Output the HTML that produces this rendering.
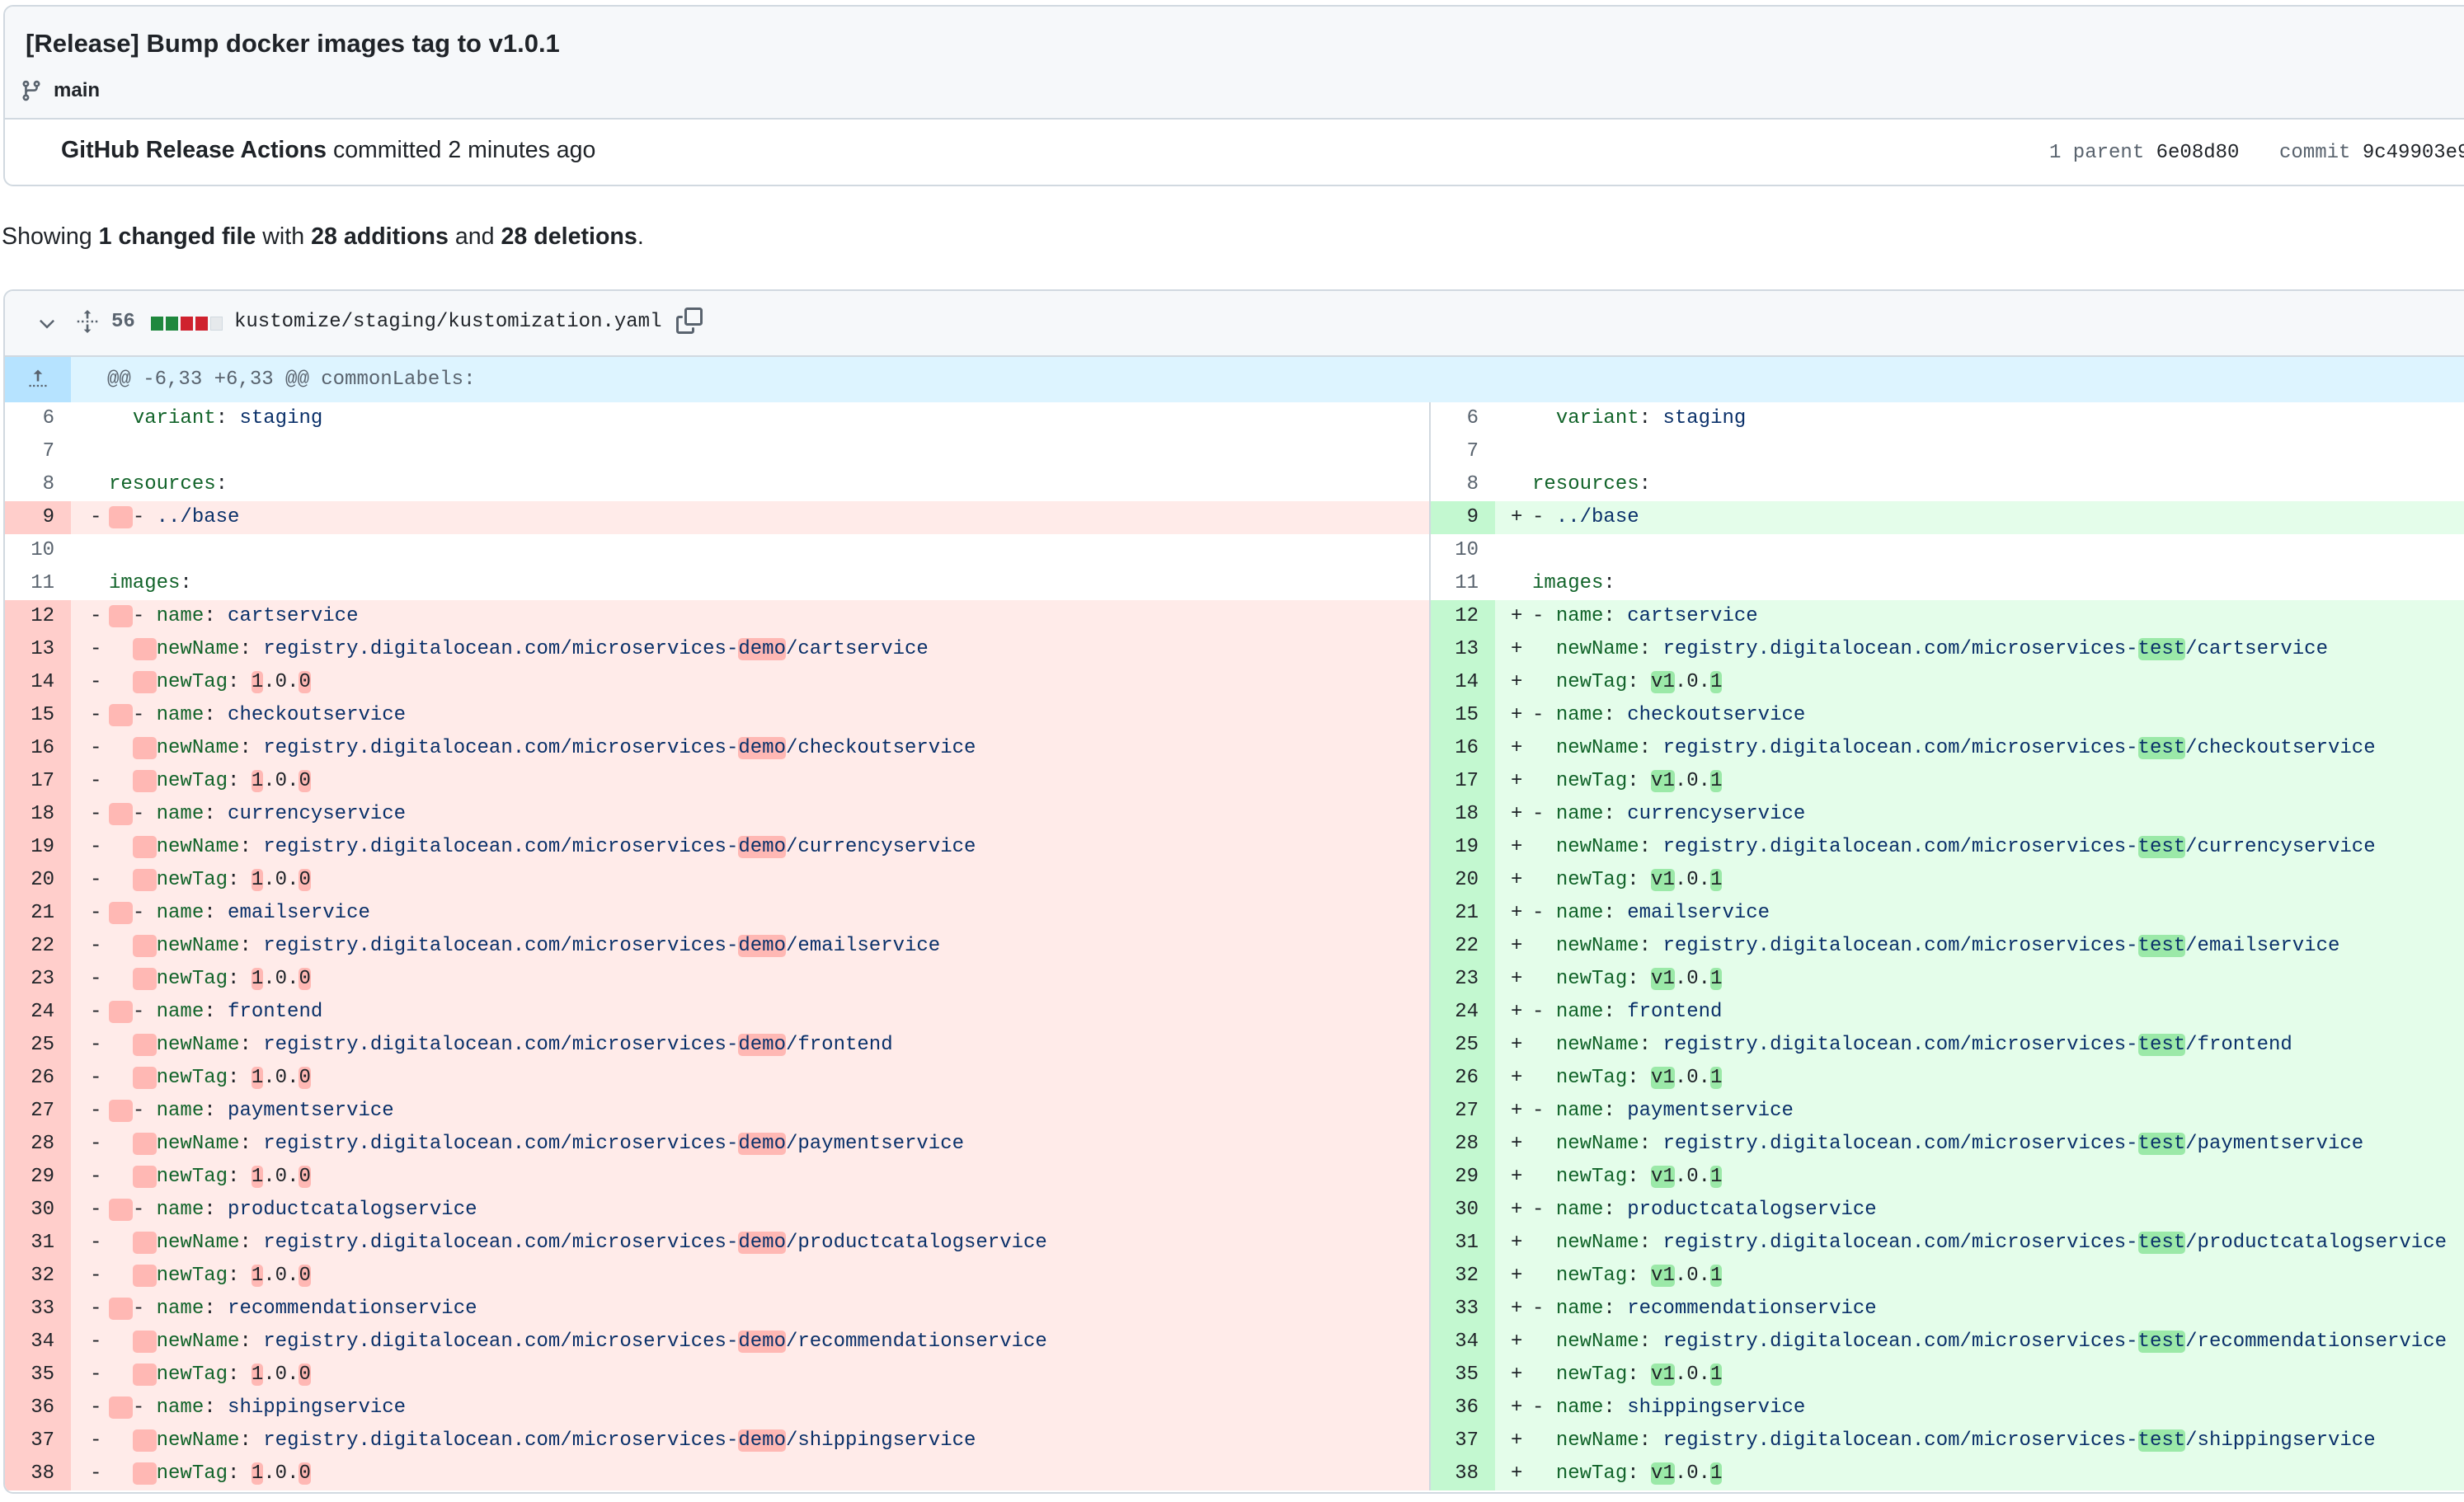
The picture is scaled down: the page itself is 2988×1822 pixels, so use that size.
<!DOCTYPE html>
<html><head><meta charset="utf-8"><style>
*{box-sizing:border-box;margin:0;padding:0}
body{width:2988px;height:1822px;background:#fff;position:relative;overflow:hidden;font-family:"Liberation Sans",sans-serif;color:#1f2328}
.box{position:absolute;left:4px;width:3100px;border:2px solid #d1d9e0;border-radius:12px;overflow:hidden}
.mono{font-family:"Liberation Mono",monospace}
.row{display:flex;height:40px;line-height:40px;font-family:"Liberation Mono",monospace;font-size:24px;white-space:pre}
.n{width:80px;text-align:right;padding-right:20px;color:#59636e;flex:none}
.lc{width:1647px;flex:none;padding-left:23px}
.rn{width:80px;text-align:right;padding-right:20px;color:#59636e;flex:none;border-left:2px solid #d1d9e0}
.rc{flex:1;padding-left:19px}
.m{display:inline-block;width:23px;color:#1f2328}
.rc .m{width:26px}
.d .n{background:#ffcecb;color:#1f2328}.d .lc{background:#ffebe9}
.a .rn{background:#c3f8d0;color:#1f2328}.a .rc{background:#e4fdea}
.k{color:#116329}.v{color:#0a3069}
.x{background:#ffb8b4;border-radius:5px}
.y{background:#9be9a8;border-radius:5px}
</style></head><body>
<div class="box" style="top:6px;height:220px">
 <div style="background:#f6f8fa;height:137px;border-bottom:2px solid #d1d9e0;position:relative">
  <div style="position:absolute;left:25px;top:27px;font-size:31px;font-weight:bold">[Release] Bump docker images tag to v1.0.1</div>
  <svg style="position:absolute;left:18px;top:88px" width="28" height="28" viewBox="0 0 16 16" fill="#59636e"><path d="M9.5 3.25a2.25 2.25 0 1 1 3 2.122V6A2.5 2.5 0 0 1 10 8.5H6a1 1 0 0 0-1 1v1.128a2.251 2.251 0 1 1-1.5 0V5.372a2.25 2.25 0 1 1 1.5 0v1.836A2.493 2.493 0 0 1 6 7h4a1 1 0 0 0 1-1v-.628A2.25 2.25 0 0 1 9.5 3.25Zm-6 0a.75.75 0 1 0 1.5 0 .75.75 0 0 0-1.5 0Zm8.25-.75a.75.75 0 1 0 0 1.5.75.75 0 0 0 0-1.5ZM4.25 12a.75.75 0 1 0 0 1.5.75.75 0 0 0 0-1.5Z"/></svg>
  <div style="position:absolute;left:59px;top:88px;font-size:24px;font-weight:bold">main</div>
 </div>
 <div style="position:absolute;left:68px;top:158px;font-size:28.5px"><b>GitHub Release Actions</b> committed 2 minutes ago</div>
 <div class="mono" style="position:absolute;left:2479px;top:164px;font-size:24px;color:#59636e">1 parent <span style="color:#1f2328">6e08d80</span></div>
 <div class="mono" style="position:absolute;left:2758px;top:164px;font-size:24px;color:#59636e;white-space:nowrap">commit <span style="color:#1f2328">9c49903e9a1</span></div>
</div>
<div style="position:absolute;left:2px;top:271px;font-size:28.6px">Showing <b>1 changed file</b> with <b>28 additions</b> and <b>28 deletions</b>.</div>
<div class="box" style="top:351px;height:1461px">
 <div style="background:#f6f8fa;height:80px;border-bottom:2px solid #d1d9e0;position:relative">
  <svg style="position:absolute;left:38px;top:26px" width="26" height="26" viewBox="0 0 16 16"><path d="M3 6l5 5 5-5" fill="none" stroke="#59636e" stroke-width="1.5"/></svg>
  <svg style="position:absolute;left:86px;top:22px" width="28" height="30" viewBox="0 0 16 16" fill="#59636e"><path d="M8 0l2.5 2.5H8.75V6h-1.5V2.5H5.5zM8 16l2.5-2.5H8.75V10h-1.5v3.5H5.5zM1 7.3h1.4v1.4H1zM4 7.3h1.4v1.4H4zM7.3 7.3h1.4v1.4H7.3zM10.6 7.3h1.4v1.4h-1.4zM13.6 7.3H15v1.4h-1.4z"/></svg>
  <div class="mono" style="position:absolute;left:129px;top:24px;font-size:24px;font-weight:bold;color:#59636e">56</div>
  <div style="position:absolute;left:177px;top:31px;display:flex;gap:3px">
   <span style="width:15px;height:17px;background:#1f883d"></span><span style="width:15px;height:17px;background:#1f883d"></span><span style="width:15px;height:17px;background:#cf222e"></span><span style="width:15px;height:17px;background:#cf222e"></span><span style="width:15px;height:17px;background:#e6e9ec;border:1px solid #d1d9e0"></span></div>
  <div class="mono" style="position:absolute;left:278px;top:24px;font-size:24px">kustomize/staging/kustomization.yaml</div>
  <svg style="position:absolute;left:814px;top:20px" width="32" height="32" viewBox="0 0 16 16" fill="#59636e"><path d="M0 6.75C0 5.784.784 5 1.75 5h1.5a.75.75 0 0 1 0 1.5h-1.5a.25.25 0 0 0-.25.25v7.5c0 .138.112.25.25.25h7.5a.25.25 0 0 0 .25-.25v-1.5a.75.75 0 0 1 1.5 0v1.5A1.75 1.75 0 0 1 9.25 16h-7.5A1.75 1.75 0 0 1 0 14.25ZM5 1.75C5 .784 5.784 0 6.75 0h7.5C15.216 0 16 .784 16 1.75v7.5A1.75 1.75 0 0 1 14.25 11h-7.5A1.75 1.75 0 0 1 5 9.25Zm1.75-.25a.25.25 0 0 0-.25.25v7.5c0 .138.112.25.25.25h7.5a.25.25 0 0 0 .25-.25v-7.5a.25.25 0 0 0-.25-.25Z"/></svg>
 </div>
 <div style="display:flex;height:55px;line-height:55px">
  <div style="width:80px;background:#b6e3ff;position:relative"><svg style="position:absolute;left:26px;top:12px" width="28" height="28" viewBox="0 0 16 16" fill="#59636e"><path d="M8 2l3 3H8.75v5h-1.5V5H5zM2 12.5h1.3v1.3H2zM4.6 12.5h1.3v1.3H4.6zM7.3 12.5h1.3v1.3H7.3zM10 12.5h1.3v1.3H10zM12.7 12.5H14v1.3h-1.3z"/></svg></div>
  <div class="mono" style="flex:1;background:#ddf4ff;padding-left:44px;font-size:24px;color:#59636e">@@ -6,33 +6,33 @@ commonLabels:</div>
 </div>
 <div class="row"><span class="n">6</span><span class="lc"><span class="m"> </span>  <span class="k">variant</span>: <span class="v">staging</span></span><span class="rn">6</span><span class="rc"><span class="m"> </span>  <span class="k">variant</span>: <span class="v">staging</span></span></div>
 <div class="row"><span class="n">7</span><span class="lc"></span><span class="rn">7</span><span class="rc"></span></div>
 <div class="row"><span class="n">8</span><span class="lc"><span class="m"> </span><span class="k">resources</span>:</span><span class="rn">8</span><span class="rc"><span class="m"> </span><span class="k">resources</span>:</span></div>
 <div class="row d a"><span class="n">9</span><span class="lc"><span class="m">-</span><span class="x">  </span>- <span class="v">../base</span></span><span class="rn">9</span><span class="rc"><span class="m">+</span>- <span class="v">../base</span></span></div>
 <div class="row"><span class="n">10</span><span class="lc"></span><span class="rn">10</span><span class="rc"></span></div>
 <div class="row"><span class="n">11</span><span class="lc"><span class="m"> </span><span class="k">images</span>:</span><span class="rn">11</span><span class="rc"><span class="m"> </span><span class="k">images</span>:</span></div>
<div class="row d a"><span class="n">12</span><span class="lc"><span class="m">-</span><span class="x">  </span>- <span class="k">name</span>: <span class="v">cartservice</span></span><span class="rn">12</span><span class="rc"><span class="m">+</span>- <span class="k">name</span>: <span class="v">cartservice</span></span></div>
<div class="row d a"><span class="n">13</span><span class="lc"><span class="m">-</span>  <span class="x">  </span><span class="k">newName</span>: <span class="v">registry.digitalocean.com/microservices-<span class="x">demo</span>/cartservice</span></span><span class="rn">13</span><span class="rc"><span class="m">+</span>  <span class="k">newName</span>: <span class="v">registry.digitalocean.com/microservices-<span class="y">test</span>/cartservice</span></span></div>
<div class="row d a"><span class="n">14</span><span class="lc"><span class="m">-</span>  <span class="x">  </span><span class="k">newTag</span>: <span class="x">1</span>.0.<span class="x">0</span></span><span class="rn">14</span><span class="rc"><span class="m">+</span>  <span class="k">newTag</span>: <span class="y">v1</span>.0.<span class="y">1</span></span></div>
<div class="row d a"><span class="n">15</span><span class="lc"><span class="m">-</span><span class="x">  </span>- <span class="k">name</span>: <span class="v">checkoutservice</span></span><span class="rn">15</span><span class="rc"><span class="m">+</span>- <span class="k">name</span>: <span class="v">checkoutservice</span></span></div>
<div class="row d a"><span class="n">16</span><span class="lc"><span class="m">-</span>  <span class="x">  </span><span class="k">newName</span>: <span class="v">registry.digitalocean.com/microservices-<span class="x">demo</span>/checkoutservice</span></span><span class="rn">16</span><span class="rc"><span class="m">+</span>  <span class="k">newName</span>: <span class="v">registry.digitalocean.com/microservices-<span class="y">test</span>/checkoutservice</span></span></div>
<div class="row d a"><span class="n">17</span><span class="lc"><span class="m">-</span>  <span class="x">  </span><span class="k">newTag</span>: <span class="x">1</span>.0.<span class="x">0</span></span><span class="rn">17</span><span class="rc"><span class="m">+</span>  <span class="k">newTag</span>: <span class="y">v1</span>.0.<span class="y">1</span></span></div>
<div class="row d a"><span class="n">18</span><span class="lc"><span class="m">-</span><span class="x">  </span>- <span class="k">name</span>: <span class="v">currencyservice</span></span><span class="rn">18</span><span class="rc"><span class="m">+</span>- <span class="k">name</span>: <span class="v">currencyservice</span></span></div>
<div class="row d a"><span class="n">19</span><span class="lc"><span class="m">-</span>  <span class="x">  </span><span class="k">newName</span>: <span class="v">registry.digitalocean.com/microservices-<span class="x">demo</span>/currencyservice</span></span><span class="rn">19</span><span class="rc"><span class="m">+</span>  <span class="k">newName</span>: <span class="v">registry.digitalocean.com/microservices-<span class="y">test</span>/currencyservice</span></span></div>
<div class="row d a"><span class="n">20</span><span class="lc"><span class="m">-</span>  <span class="x">  </span><span class="k">newTag</span>: <span class="x">1</span>.0.<span class="x">0</span></span><span class="rn">20</span><span class="rc"><span class="m">+</span>  <span class="k">newTag</span>: <span class="y">v1</span>.0.<span class="y">1</span></span></div>
<div class="row d a"><span class="n">21</span><span class="lc"><span class="m">-</span><span class="x">  </span>- <span class="k">name</span>: <span class="v">emailservice</span></span><span class="rn">21</span><span class="rc"><span class="m">+</span>- <span class="k">name</span>: <span class="v">emailservice</span></span></div>
<div class="row d a"><span class="n">22</span><span class="lc"><span class="m">-</span>  <span class="x">  </span><span class="k">newName</span>: <span class="v">registry.digitalocean.com/microservices-<span class="x">demo</span>/emailservice</span></span><span class="rn">22</span><span class="rc"><span class="m">+</span>  <span class="k">newName</span>: <span class="v">registry.digitalocean.com/microservices-<span class="y">test</span>/emailservice</span></span></div>
<div class="row d a"><span class="n">23</span><span class="lc"><span class="m">-</span>  <span class="x">  </span><span class="k">newTag</span>: <span class="x">1</span>.0.<span class="x">0</span></span><span class="rn">23</span><span class="rc"><span class="m">+</span>  <span class="k">newTag</span>: <span class="y">v1</span>.0.<span class="y">1</span></span></div>
<div class="row d a"><span class="n">24</span><span class="lc"><span class="m">-</span><span class="x">  </span>- <span class="k">name</span>: <span class="v">frontend</span></span><span class="rn">24</span><span class="rc"><span class="m">+</span>- <span class="k">name</span>: <span class="v">frontend</span></span></div>
<div class="row d a"><span class="n">25</span><span class="lc"><span class="m">-</span>  <span class="x">  </span><span class="k">newName</span>: <span class="v">registry.digitalocean.com/microservices-<span class="x">demo</span>/frontend</span></span><span class="rn">25</span><span class="rc"><span class="m">+</span>  <span class="k">newName</span>: <span class="v">registry.digitalocean.com/microservices-<span class="y">test</span>/frontend</span></span></div>
<div class="row d a"><span class="n">26</span><span class="lc"><span class="m">-</span>  <span class="x">  </span><span class="k">newTag</span>: <span class="x">1</span>.0.<span class="x">0</span></span><span class="rn">26</span><span class="rc"><span class="m">+</span>  <span class="k">newTag</span>: <span class="y">v1</span>.0.<span class="y">1</span></span></div>
<div class="row d a"><span class="n">27</span><span class="lc"><span class="m">-</span><span class="x">  </span>- <span class="k">name</span>: <span class="v">paymentservice</span></span><span class="rn">27</span><span class="rc"><span class="m">+</span>- <span class="k">name</span>: <span class="v">paymentservice</span></span></div>
<div class="row d a"><span class="n">28</span><span class="lc"><span class="m">-</span>  <span class="x">  </span><span class="k">newName</span>: <span class="v">registry.digitalocean.com/microservices-<span class="x">demo</span>/paymentservice</span></span><span class="rn">28</span><span class="rc"><span class="m">+</span>  <span class="k">newName</span>: <span class="v">registry.digitalocean.com/microservices-<span class="y">test</span>/paymentservice</span></span></div>
<div class="row d a"><span class="n">29</span><span class="lc"><span class="m">-</span>  <span class="x">  </span><span class="k">newTag</span>: <span class="x">1</span>.0.<span class="x">0</span></span><span class="rn">29</span><span class="rc"><span class="m">+</span>  <span class="k">newTag</span>: <span class="y">v1</span>.0.<span class="y">1</span></span></div>
<div class="row d a"><span class="n">30</span><span class="lc"><span class="m">-</span><span class="x">  </span>- <span class="k">name</span>: <span class="v">productcatalogservice</span></span><span class="rn">30</span><span class="rc"><span class="m">+</span>- <span class="k">name</span>: <span class="v">productcatalogservice</span></span></div>
<div class="row d a"><span class="n">31</span><span class="lc"><span class="m">-</span>  <span class="x">  </span><span class="k">newName</span>: <span class="v">registry.digitalocean.com/microservices-<span class="x">demo</span>/productcatalogservice</span></span><span class="rn">31</span><span class="rc"><span class="m">+</span>  <span class="k">newName</span>: <span class="v">registry.digitalocean.com/microservices-<span class="y">test</span>/productcatalogservice</span></span></div>
<div class="row d a"><span class="n">32</span><span class="lc"><span class="m">-</span>  <span class="x">  </span><span class="k">newTag</span>: <span class="x">1</span>.0.<span class="x">0</span></span><span class="rn">32</span><span class="rc"><span class="m">+</span>  <span class="k">newTag</span>: <span class="y">v1</span>.0.<span class="y">1</span></span></div>
<div class="row d a"><span class="n">33</span><span class="lc"><span class="m">-</span><span class="x">  </span>- <span class="k">name</span>: <span class="v">recommendationservice</span></span><span class="rn">33</span><span class="rc"><span class="m">+</span>- <span class="k">name</span>: <span class="v">recommendationservice</span></span></div>
<div class="row d a"><span class="n">34</span><span class="lc"><span class="m">-</span>  <span class="x">  </span><span class="k">newName</span>: <span class="v">registry.digitalocean.com/microservices-<span class="x">demo</span>/recommendationservice</span></span><span class="rn">34</span><span class="rc"><span class="m">+</span>  <span class="k">newName</span>: <span class="v">registry.digitalocean.com/microservices-<span class="y">test</span>/recommendationservice</span></span></div>
<div class="row d a"><span class="n">35</span><span class="lc"><span class="m">-</span>  <span class="x">  </span><span class="k">newTag</span>: <span class="x">1</span>.0.<span class="x">0</span></span><span class="rn">35</span><span class="rc"><span class="m">+</span>  <span class="k">newTag</span>: <span class="y">v1</span>.0.<span class="y">1</span></span></div>
<div class="row d a"><span class="n">36</span><span class="lc"><span class="m">-</span><span class="x">  </span>- <span class="k">name</span>: <span class="v">shippingservice</span></span><span class="rn">36</span><span class="rc"><span class="m">+</span>- <span class="k">name</span>: <span class="v">shippingservice</span></span></div>
<div class="row d a"><span class="n">37</span><span class="lc"><span class="m">-</span>  <span class="x">  </span><span class="k">newName</span>: <span class="v">registry.digitalocean.com/microservices-<span class="x">demo</span>/shippingservice</span></span><span class="rn">37</span><span class="rc"><span class="m">+</span>  <span class="k">newName</span>: <span class="v">registry.digitalocean.com/microservices-<span class="y">test</span>/shippingservice</span></span></div>
<div class="row d a"><span class="n">38</span><span class="lc"><span class="m">-</span>  <span class="x">  </span><span class="k">newTag</span>: <span class="x">1</span>.0.<span class="x">0</span></span><span class="rn">38</span><span class="rc"><span class="m">+</span>  <span class="k">newTag</span>: <span class="y">v1</span>.0.<span class="y">1</span></span></div>
</div>
</body></html>
